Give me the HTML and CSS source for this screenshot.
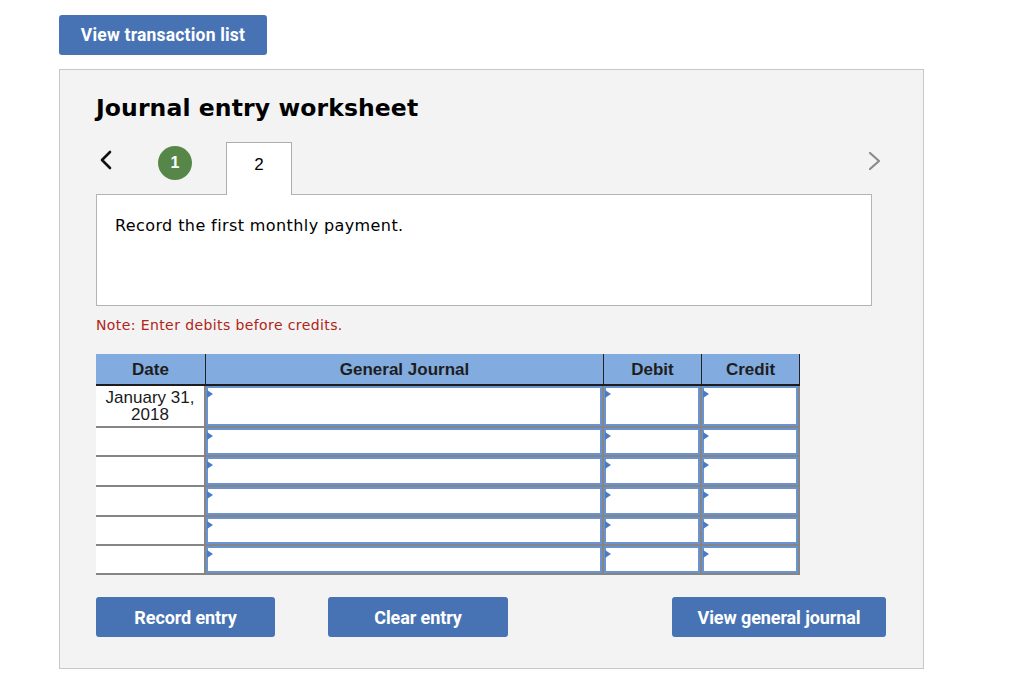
FILE: index.html
```html
<!DOCTYPE html>
<html>
<head>
<meta charset="utf-8">
<link rel="stylesheet" href="styles.css">
</head>
<body>
<div class="page">
  <button class="btn btn-top">View transaction list</button>
  <div class="panel">
    <h1 class="title">Journal entry worksheet</h1>
    <div class="nav">
      <svg class="prev" width="14" height="20" viewBox="0 0 14 20"><path d="M11 2 L3 10 L11 18" fill="none" stroke="#111" stroke-width="2.6" stroke-linecap="round" stroke-linejoin="round"/></svg>
      <span class="step-done">1</span>
      <span class="tab">2</span>
      <svg class="next" width="15" height="20" viewBox="0 0 15 20"><path d="M3 2 L12 10 L3 18" fill="none" stroke="#8a8a8a" stroke-width="2.2" stroke-linecap="round" stroke-linejoin="round"/></svg>
    </div>
    <div class="task">Record the first monthly payment.</div>
    <p class="note">Note: Enter debits before credits.</p>
    <table class="journal">
      <colgroup><col class="w-date"><col class="w-gj"><col class="w-amt"><col class="w-amt"></colgroup>
      <thead>
        <tr><th>Date</th><th>General Journal</th><th>Debit</th><th>Credit</th></tr>
      </thead>
      <tbody>
        <tr class="row-first">
          <td class="date">January 31,<br>2018</td>
          <td class="inp"><div class="field"></div></td>
          <td class="inp"><div class="field"></div></td>
          <td class="inp"><div class="field"></div></td>
        </tr>
        <tr>
          <td class="date"></td>
          <td class="inp"><div class="field"></div></td>
          <td class="inp"><div class="field"></div></td>
          <td class="inp"><div class="field"></div></td>
        </tr>
        <tr class="row-tall">
          <td class="date"></td>
          <td class="inp"><div class="field"></div></td>
          <td class="inp"><div class="field"></div></td>
          <td class="inp"><div class="field"></div></td>
        </tr>
        <tr class="row-tall">
          <td class="date"></td>
          <td class="inp"><div class="field"></div></td>
          <td class="inp"><div class="field"></div></td>
          <td class="inp"><div class="field"></div></td>
        </tr>
        <tr>
          <td class="date"></td>
          <td class="inp"><div class="field"></div></td>
          <td class="inp"><div class="field"></div></td>
          <td class="inp"><div class="field"></div></td>
        </tr>
        <tr>
          <td class="date"></td>
          <td class="inp"><div class="field"></div></td>
          <td class="inp"><div class="field"></div></td>
          <td class="inp"><div class="field"></div></td>
        </tr>
      </tbody>
    </table>
    <div class="actions">
      <button class="btn btn-record">Record entry</button>
      <button class="btn btn-clear">Clear entry</button>
      <button class="btn btn-view">View general journal</button>
    </div>
  </div>
</div>
</body>
</html>
```

FILE: styles.css
```css
* { box-sizing: border-box; }
html, body { margin: 0; padding: 0; background: #fff; }
body { font-family: "DejaVu Sans", Verdana, sans-serif; color: #000; }

.page { padding: 15px 0 0 59px; }

.btn {
  display: inline-flex;
  align-items: center;
  justify-content: center;
  height: 40px;
  border: none;
  border-radius: 3px;
  background: #4773b4;
  color: #fff;
  font-family: Roboto, "Liberation Sans", sans-serif;
  font-weight: 700;
  font-size: 18px;
  letter-spacing: -0.1px;
  padding: 0;
  cursor: pointer;
}
.btn-top { width: 208px; display: flex; font-size: 17.5px; letter-spacing: 0.2px; }

.panel {
  margin-top: 14px;
  width: 865px;
  height: 600px;
  border: 1px solid #c8c8c8;
  background: #f3f3f3;
  padding: 25px 37px 0 36px;
}

.title {
  margin: 0;
  font-size: 23.5px;
  line-height: 27px;
  font-weight: 700;
  letter-spacing: 0.1px;
}

.nav {
  margin-top: 20px;
  height: 52px;
  display: flex;
  align-items: flex-start;
}
.prev { margin: 8px 0 0 3px; }
.step-done {
  margin: 4px 0 0 45px;
  width: 34px;
  height: 34px;
  border-radius: 50%;
  background: #578748;
  color: #fff;
  font-family: "Liberation Sans", Arial, sans-serif;
  font-size: 16px;
  font-weight: 700;
  display: flex;
  align-items: center;
  justify-content: center;
}
.tab {
  position: relative;
  z-index: 1;
  margin-left: 34px;
  width: 66px;
  height: 53px;
  background: #fff;
  border: 1px solid #adadad;
  border-bottom: none;
  display: flex;
  justify-content: center;
  padding-top: 12px;
  font-family: "Liberation Sans", Arial, sans-serif;
  font-size: 17px;
}
.next { margin: 9px 4px 0 auto; }

.task {
  width: 776px;
  height: 112px;
  background: #fff;
  border: 1px solid #b4b4b4;
  padding: 22px 0 0 18px;
  font-size: 16px;
  line-height: 18px;
  letter-spacing: 0.4px;
}

.note {
  margin: 11px 0 0;
  color: #b02418;
  font-size: 14px;
  line-height: 16px;
  letter-spacing: 0.4px;
}

.journal {
  margin-top: 21px;
  width: 704px;
  table-layout: fixed;
  border-collapse: separate;
  border-spacing: 0;
  font-family: "Liberation Sans", Arial, sans-serif;
}
.w-date { width: 110px; }
.w-gj { width: 398px; }
.w-amt { width: 98px; }

.journal th {
  height: 32px;
  background: #82abe0;
  color: #1e1e1e;
  font-size: 17px;
  font-weight: 700;
  border-right: 1px solid #222;
  border-bottom: 2px solid #1c1c1c;
  padding: 2px 0 0;
  text-align: center;
}

.journal td {
  padding: 0;
  background: #fff;
  border-right: 2px solid #858585;
  border-bottom: 2px solid #858585;
  vertical-align: top;
  height: 29px;
}
.journal td.date {
  text-align: center;
  font-size: 17px;
  line-height: 17px;
  color: #1a1a1a;
  padding-top: 3px;
}

.field {
  position: relative;
  height: 27px;
  border: 2px solid #6a94d1;
  background: #fff;
}
.journal tr.row-first td { height: 42px; }
.row-first .field { height: 40px; }
.journal tr.row-tall td { height: 30px; }
.row-tall .field { height: 28px; }

.field::before {
  content: "";
  position: absolute;
  left: -1px;
  top: 2px;
  border-left: 6px solid #4a7cc4;
  border-top: 4px solid transparent;
  border-bottom: 4px solid transparent;
}

.actions {
  margin-top: 22px;
  display: flex;
}
.btn-record { width: 179px; }
.btn-clear { width: 180px; margin-left: 53px; }
.btn-view { width: 214px; margin-left: auto; }
```
